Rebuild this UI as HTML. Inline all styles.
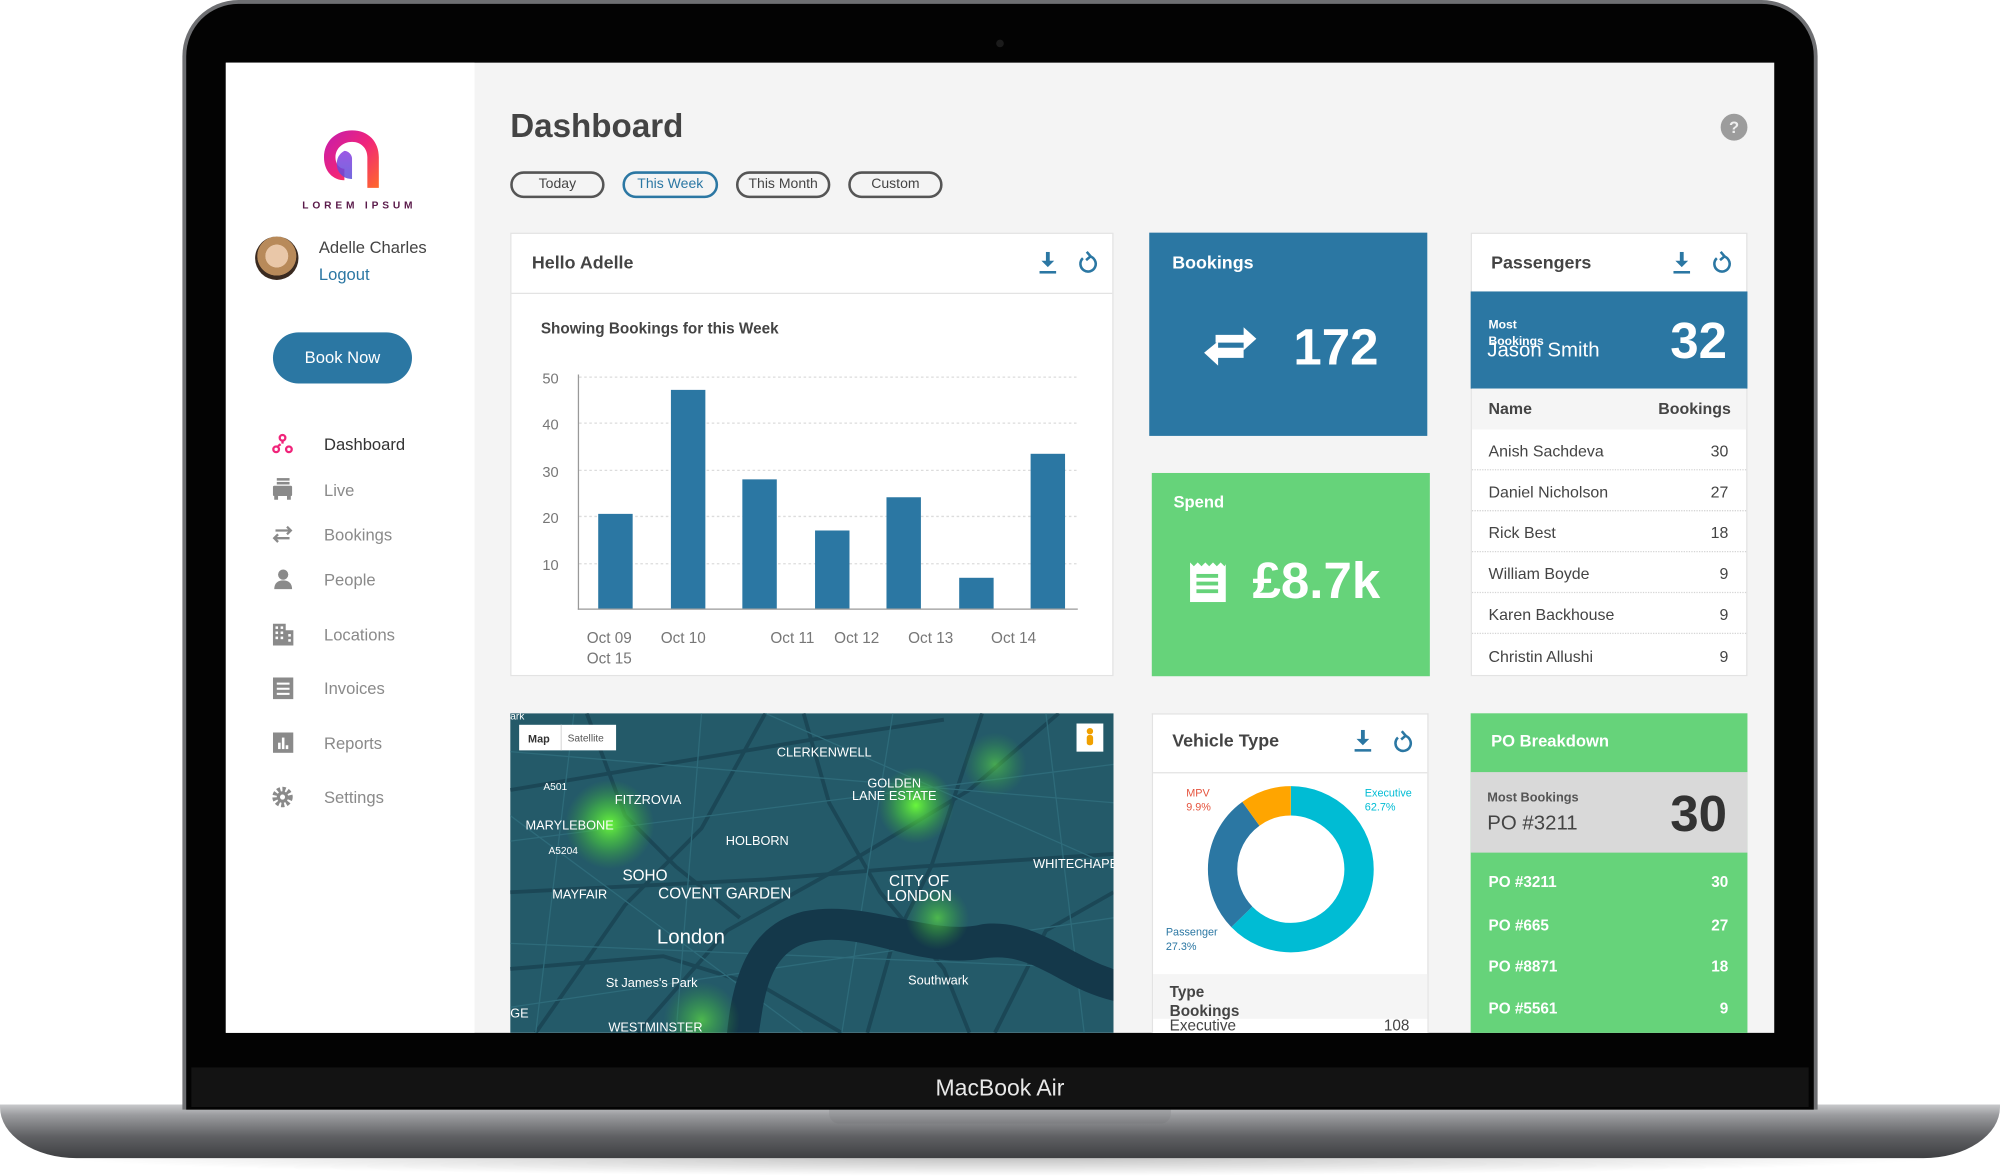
<!DOCTYPE html>
<html><head><meta charset="utf-8"><style>
*{margin:0;padding:0;box-sizing:border-box}
body{width:2000px;height:1176px;overflow:hidden;background:#fff;font-family:"Liberation Sans",sans-serif}
#w{position:absolute;left:0;top:0;width:1568px;height:920px;transform:scale(1.27551,1.2783);transform-origin:0 0}
.a{position:absolute}
.t{position:absolute;white-space:nowrap;line-height:1}
.card{position:absolute;background:#fff;border:1px solid #e3e3e3}
.nav{position:absolute;left:254px;font-size:13px;color:#8a8a8a;line-height:1}
.pill{position:absolute;top:134px;height:21px;border:2px solid #555;border-radius:11px;font-size:11px;color:#444;text-align:center;line-height:17px}
.row{position:absolute;left:1154px;width:215px;height:32px;border-bottom:1px dotted #d5d5d5;font-size:12.5px;color:#444}
.row span{position:absolute;top:10px}
.po{position:absolute;left:1167px;width:188px;font-size:12px;font-weight:bold;color:#fff;line-height:1}
.po b{position:absolute;right:0}
</style></head><body><div id="w">
<!-- shadow & base -->
<div class="a" style="left:40px;top:890px;width:1488px;height:30px;border-radius:50%;background:radial-gradient(ellipse at center,rgba(0,0,0,.25),rgba(0,0,0,0) 70%)"></div>
<div class="a" style="left:0;top:864px;width:1568px;height:42px;border-radius:0 0 60px 60px/0 0 40px 40px;background:linear-gradient(#c9cacc 0%,#9a9b9e 20%,#5f6063 60%,#3e3f42 100%)"></div>
<div class="a" style="left:650px;top:866px;width:268px;height:13px;border-radius:0 0 8px 8px;background:linear-gradient(#a9aaad,#7d7e81)"></div>
<!-- lid -->
<div class="a" style="left:143px;top:0;width:1282px;height:868px;border-radius:44px 44px 0 0;background:#6e6f72"></div>
<div class="a" style="left:146px;top:3px;width:1276px;height:865px;border-radius:41px 41px 0 0;background:#030303"></div>
<div class="a" style="left:150px;top:835px;width:1268px;height:31px;background:#131313"></div>
<div class="t" style="left:684px;top:842px;width:200px;text-align:center;color:#e8e8e8;font-size:18px">MacBook Air</div>
<div class="a" style="left:781px;top:31px;width:6px;height:6px;border-radius:50%;background:#1b1b1b"></div>
<!-- screen -->
<div class="a" style="left:177px;top:49px;width:1214px;height:759px;background:#f4f4f4;overflow:hidden">
<div class="a" style="left:0;top:0;width:195px;height:759px;background:#fff"></div>
</div>
<!-- sidebar -->
<svg class="a" style="left:250px;top:98px" width="52" height="54" viewBox="0 0 52 54"><defs><linearGradient id="lg" x1="0" y1="0" x2="1" y2="1"><stop offset="0" stop-color="#c21cb0"/><stop offset=".5" stop-color="#f0247a"/><stop offset="1" stop-color="#ff6a2a"/></linearGradient><linearGradient id="lg2" x1="0" y1="0" x2="0" y2="1"><stop offset="0" stop-color="#8a3be0"/><stop offset="1" stop-color="#5a4fd8"/></linearGradient></defs><path d="M26 4C13 4 4 13 4 25c0 11 7 18 16 18l0-9c-4 0-7-4-7-9 0-7 6-12 13-12s12 5 12 12v24h9V25C47 13 39 4 26 4z" fill="url(#lg)"/><path d="M20 20c-4 2-6 6-6 10 0 7 5 12 12 12V26c0-3-3-6-6-6z" fill="url(#lg2)" opacity=".85"/></svg>
<div class="t" style="left:237px;top:157px;font-size:8px;font-weight:bold;letter-spacing:3px;color:#5a1a4a">LOREM IPSUM</div>
<div class="a" style="left:200px;top:185px;width:34px;height:34px;border-radius:50%;background:radial-gradient(circle at 50% 45%,#e9c7a8 0 35%,#b88a5a 36% 60%,#3a2a20 61%)"></div>
<div class="t" style="left:250px;top:187px;font-size:13px;color:#444">Adelle Charles</div>
<div class="t" style="left:250px;top:208px;font-size:13px;color:#2b77a3">Logout</div>
<div class="a" style="left:214px;top:260px;width:109px;height:40px;border-radius:20px;background:#2b77a3;color:#fff;font-size:13px;text-align:center;line-height:40px">Book Now</div>
<svg class="a" style="left:213px;top:339px" width="17" height="17" viewBox="0 0 17 17" fill="none" stroke="#f0247a" stroke-width="1.8"><circle cx="8.5" cy="3.5" r="2.2"/><circle cx="3.5" cy="12.5" r="2.2"/><circle cx="13.5" cy="12.5" r="2.2"/><path d="M8.5 6v2M5 10l2-1.5"/></svg>
<div class="nav" style="top:341px;color:#333">Dashboard</div>
<svg class="a" style="left:213px;top:373px" width="17" height="18" viewBox="0 0 17 18" fill="#8a8a8a"><rect x="1" y="7" width="15" height="8" rx="1"/><rect x="2" y="15" width="3" height="3"/><rect x="12" y="15" width="3" height="3"/><rect x="4" y="1" width="10" height="2"/><rect x="4" y="4" width="10" height="2"/></svg>
<div class="nav" style="top:377px">Live</div>
<svg class="a" style="left:213px;top:411px" width="17" height="14" viewBox="0 0 17 14" fill="none" stroke="#8a8a8a" stroke-width="1.8"><path d="M3 4h12M12 1l3 3-3 3M14 10H2M5 7l-3 3 3 3"/></svg>
<div class="nav" style="top:412px">Bookings</div>
<svg class="a" style="left:214px;top:445px" width="16" height="16" viewBox="0 0 16 16" fill="#8a8a8a"><circle cx="8" cy="4.5" r="4"/><path d="M1 16c0-5 3-7 7-7s7 2 7 7z"/></svg>
<div class="nav" style="top:447px">People</div>
<svg class="a" style="left:213px;top:487px" width="18" height="18" viewBox="0 0 18 18" fill="#8a8a8a"><path d="M1 1h10v17H1zM11 6h6v12h-6z"/><g fill="#fff"><rect x="3" y="3" width="2" height="2"/><rect x="7" y="3" width="2" height="2"/><rect x="3" y="7" width="2" height="2"/><rect x="7" y="7" width="2" height="2"/><rect x="3" y="11" width="2" height="2"/><rect x="7" y="11" width="2" height="2"/><rect x="13" y="9" width="2" height="2"/><rect x="13" y="13" width="2" height="2"/></g></svg>
<div class="nav" style="top:490px">Locations</div>
<svg class="a" style="left:214px;top:530px" width="16" height="17" viewBox="0 0 16 17" fill="#8a8a8a"><rect width="16" height="17"/><g fill="#fff"><rect x="3" y="4" width="10" height="1.6"/><rect x="3" y="8" width="10" height="1.6"/><rect x="3" y="12" width="10" height="1.6"/></g></svg>
<div class="nav" style="top:532px">Invoices</div>
<svg class="a" style="left:214px;top:573px" width="16" height="16" viewBox="0 0 16 16" fill="#8a8a8a"><rect width="16" height="16"/><g fill="#fff"><rect x="4" y="8" width="2" height="5"/><rect x="7" y="4" width="2" height="9"/><rect x="10" y="10" width="2" height="3"/></g></svg>
<div class="nav" style="top:575px">Reports</div>
<svg class="a" style="left:213px;top:615px" width="17" height="17" viewBox="0 0 17 17"><circle cx="8.5" cy="8.5" r="6" fill="none" stroke="#8a8a8a" stroke-width="4" stroke-dasharray="2.4 1.6"/><circle cx="8.5" cy="8.5" r="4.5" fill="#8a8a8a"/><circle cx="8.5" cy="8.5" r="2" fill="#fff"/></svg>
<div class="nav" style="top:617px">Settings</div>
<!-- header -->
<div class="t" style="left:400px;top:85px;font-size:26px;font-weight:bold;color:#444">Dashboard</div>
<div class="a" style="left:1349px;top:89px;width:21px;height:21px;border-radius:50%;background:#9c9c9c;color:#eee;font-size:13px;font-weight:bold;text-align:center;line-height:21px">?</div>
<div class="pill" style="left:400px;width:74px">Today</div>
<div class="pill" style="left:488px;width:75px;border-color:#2b77a3;color:#2b77a3">This Week</div>
<div class="pill" style="left:577px;width:74px">This Month</div>
<div class="pill" style="left:665px;width:74px">Custom</div>
<!-- hello card -->
<div class="card" style="left:400px;top:182px;width:473px;height:347px"></div>
<div class="a" style="left:401px;top:229px;width:471px;height:1px;background:#e3e3e3"></div>
<div class="t" style="left:417px;top:198px;font-size:14px;font-weight:bold;color:#444">Hello Adelle</div>
<svg class="a" style="left:814px;top:197px" width="15" height="18" viewBox="0 0 15 18" fill="#2b77a3"><path d="M6 0h3v7h3.5L7.5 12 2.5 7H6z"/><rect x="1" y="15" width="13" height="2"/></svg>
<svg class="a" style="left:844px;top:196px" width="17" height="19" viewBox="0 0 17 19" fill="none" stroke="#2b77a3" stroke-width="2"><path d="M5 6a6 6 0 1 0 5-1.5"/><path d="M8 1l3 3.5-3.5 3" /></svg>
<div class="t" style="left:424px;top:251px;font-size:12px;font-weight:bold;color:#444">Showing Bookings for this Week</div>
<svg class="a" style="left:410px;top:285px" width="450" height="240" viewBox="410 285 450 240">
<g stroke="#dcdcdc" stroke-dasharray="2 2"><line x1="454" y1="295" x2="845" y2="295"/><line x1="454" y1="331" x2="845" y2="331"/><line x1="454" y1="368" x2="845" y2="368"/><line x1="454" y1="404" x2="845" y2="404"/><line x1="454" y1="441" x2="845" y2="441"/></g>
<line x1="453.5" y1="293" x2="453.5" y2="477" stroke="#999"/><line x1="453" y1="476.5" x2="845" y2="476.5" stroke="#999"/>
<g font-size="11.5" fill="#777" text-anchor="end" font-family="Liberation Sans"><text x="438" y="300">50</text><text x="438" y="336">40</text><text x="438" y="373">30</text><text x="438" y="409">20</text><text x="438" y="446">10</text></g>
<g fill="#2b77a3"><rect x="469" y="402" width="27" height="74"/><rect x="526" y="305" width="27" height="171"/><rect x="582" y="375" width="27" height="101"/><rect x="639" y="415" width="27" height="61"/><rect x="695" y="389" width="27" height="87"/><rect x="752" y="452" width="27" height="24"/><rect x="808" y="355" width="27" height="121"/></g>
<g font-size="12" fill="#777" font-family="Liberation Sans"><text x="460" y="503">Oct 09</text><text x="518" y="503">Oct 10</text><text x="604" y="503">Oct 11</text><text x="654" y="503">Oct 12</text><text x="712" y="503">Oct 13</text><text x="777" y="503">Oct 14</text><text x="460" y="519">Oct 15</text></g>
</svg>
<!-- bookings -->
<div class="a" style="left:901px;top:182px;width:218px;height:159px;background:#2b77a3"></div>
<div class="t" style="left:919px;top:198px;font-size:14px;font-weight:bold;color:#fff">Bookings</div>
<svg class="a" style="left:941px;top:253px" width="46" height="34" viewBox="0 0 46 34" fill="#fff"><path d="M12 9h22V3l10 9-10 9v-6H12z"/><path d="M34 19H14v-5L3 23l11 10v-6h20z"/></svg>
<div class="t" style="left:1014px;top:252px;font-size:40px;font-weight:bold;color:#fff">172</div>
<!-- spend -->
<div class="a" style="left:903px;top:370px;width:218px;height:159px;background:#66d37a"></div>
<div class="t" style="left:920px;top:386px;font-size:13px;font-weight:bold;color:#fff">Spend</div>
<svg class="a" style="left:932px;top:440px" width="29" height="31" viewBox="0 0 29 31" fill="#fff"><path d="M1 0l3 3 3-3 3 3 3-3 3 3 3-3 3 3 3-3 3 3 2-3v31H1z"/><g fill="#66d37a"><rect x="6" y="9" width="17" height="3"/><rect x="6" y="15" width="17" height="3"/><rect x="6" y="21" width="17" height="3"/></g></svg>
<div class="t" style="left:982px;top:435px;font-size:40px;font-weight:bold;color:#fff">£8.7k</div>
<!-- passengers -->
<div class="card" style="left:1153px;top:182px;width:217px;height:347px"></div>
<div class="t" style="left:1169px;top:198px;font-size:14px;font-weight:bold;color:#444">Passengers</div>
<svg class="a" style="left:1311px;top:197px" width="15" height="18" viewBox="0 0 15 18" fill="#2b77a3"><path d="M6 0h3v7h3.5L7.5 12 2.5 7H6z"/><rect x="1" y="15" width="13" height="2"/></svg>
<svg class="a" style="left:1341px;top:196px" width="17" height="19" viewBox="0 0 17 19" fill="none" stroke="#2b77a3" stroke-width="2"><path d="M5 6a6 6 0 1 0 5-1.5"/><path d="M8 1l3 3.5-3.5 3"/></svg>
<div class="a" style="left:1153px;top:228px;width:217px;height:76px;background:#2b77a3"></div>
<div class="t" style="left:1167px;top:250px;font-size:9.5px;font-weight:bold;color:#fff">Most</div>
<div class="t" style="left:1167px;top:263px;font-size:9.5px;font-weight:bold;color:#fff">Bookings</div>
<div class="t" style="left:1166px;top:267px;font-size:16px;color:#fff">Jason Smith</div>
<div class="t" style="left:1290px;top:247px;width:64px;text-align:right;font-size:40px;font-weight:bold;color:#fff">32</div>
<div class="a" style="left:1154px;top:304px;width:215px;height:32px;background:#f5f5f5"></div>
<div class="t" style="left:1167px;top:314px;font-size:12.5px;font-weight:bold;color:#444">Name</div>
<div class="t" style="left:1290px;top:314px;width:67px;text-align:right;font-size:12.5px;font-weight:bold;color:#444">Bookings</div>
<div class="row" style="top:336px"><span style="left:13px">Anish Sachdeva</span><span style="right:14px">30</span></div>
<div class="row" style="top:368px"><span style="left:13px">Daniel Nicholson</span><span style="right:14px">27</span></div>
<div class="row" style="top:400px"><span style="left:13px">Rick Best</span><span style="right:14px">18</span></div>
<div class="row" style="top:432px"><span style="left:13px">William Boyde</span><span style="right:14px">9</span></div>
<div class="row" style="top:464px"><span style="left:13px">Karen Backhouse</span><span style="right:14px">9</span></div>
<div class="row" style="top:497px;border:none"><span style="left:13px">Christin Allushi</span><span style="right:14px">9</span></div>
<!-- map -->
<svg class="a" style="left:400px;top:558px" width="473" height="250" viewBox="0 0 473 250">
<defs><radialGradient id="gl"><stop offset="0" stop-color="#6dff3a" stop-opacity=".95"/><stop offset=".5" stop-color="#4bd23a" stop-opacity=".55"/><stop offset="1" stop-color="#3aa63a" stop-opacity="0"/></radialGradient></defs>
<rect width="473" height="250" fill="#245a69"/>
<g stroke="#1b4756" stroke-width="3" fill="none"><path d="M0 60 L120 40 L240 20 L340 5"/><path d="M20 250 L90 150 L150 90 L200 0"/><path d="M0 140 L200 130 L320 120 L473 110"/><path d="M100 250 L170 170 L260 120 L360 60 L430 0"/><path d="M280 250 L300 180 L330 120 L370 0"/><path d="M0 200 L120 190 L200 215 L260 250"/><path d="M380 250 L420 170 L473 140"/><path d="M60 0 L90 80 L130 120 L180 160"/><path d="M230 0 L250 70 L290 140 L340 200 L360 250"/></g>
<g stroke="#2e6b7a" stroke-width="1" fill="none"><path d="M0 30 L473 70M0 100 L473 40M0 180 L473 200M50 0 L20 250M150 0 L130 250M300 0 L260 250M420 0 L450 250M0 230 L473 160M200 0 L473 120M0 80 L230 250"/></g>
<path d="M170 250 C175 200 190 165 230 155 C280 145 330 175 370 165 C410 160 440 190 473 200 L473 225 C430 215 410 185 370 192 C320 200 280 172 240 178 C205 183 200 215 195 250 Z" fill="#14384a"/>
<circle cx="78" cy="87" r="35" fill="url(#gl)"/><circle cx="318" cy="72" r="30" fill="url(#gl)"/><circle cx="335" cy="160" r="25" fill="url(#gl)" opacity=".6"/><circle cx="150" cy="240" r="30" fill="url(#gl)" opacity=".6"/><circle cx="380" cy="40" r="25" fill="url(#gl)" opacity=".5"/>
<g fill="#fff" font-family="Liberation Sans" font-size="10"><text x="209" y="34">CLERKENWELL</text><text x="280" y="58">GOLDEN</text><text x="268" y="68">LANE ESTATE</text><text x="82" y="71">FITZROVIA</text><text x="12" y="91">MARYLEBONE</text><text x="169" y="103">HOLBORN</text><text x="88" y="131" font-size="12">SOHO</text><text x="33" y="145">MAYFAIR</text><text x="116" y="145" font-size="12">COVENT GARDEN</text><text x="297" y="135" font-size="12">CITY OF</text><text x="295" y="147" font-size="12">LONDON</text><text x="410" y="121">WHITECHAPEL</text><text x="115" y="180" font-size="16">London</text><text x="75" y="214">St James's Park</text><text x="312" y="212">Southwark</text><text x="77" y="249">WESTMINSTER</text><text x="0" y="238">GE</text><text x="26" y="60" font-size="8">A501</text><text x="30" y="110" font-size="8">A5204</text><text x="0" y="5" font-size="8">ark</text></g>
<rect x="7" y="9" width="76" height="20" fill="#fff"/><line x1="40" y1="9" x2="40" y2="29" stroke="#ddd"/><text x="14" y="23" font-size="8.5" font-weight="bold" fill="#333" font-family="Liberation Sans">Map</text><text x="45" y="22" font-size="8" fill="#555" font-family="Liberation Sans">Satellite</text>
<rect x="444" y="8" width="21" height="22" fill="#fff"/><circle cx="454.5" cy="14" r="2.5" fill="#f0a000"/><rect x="452" y="17" width="5" height="8" rx="2" fill="#f0a000"/>
</svg>
<!-- vehicle type -->
<div class="card" style="left:903px;top:558px;width:217px;height:250px;border-bottom:none"></div>
<div class="a" style="left:904px;top:604px;width:215px;height:1px;background:#e3e3e3"></div>
<div class="t" style="left:919px;top:572px;font-size:14px;font-weight:bold;color:#444">Vehicle Type</div>
<svg class="a" style="left:1061px;top:571px" width="15" height="18" viewBox="0 0 15 18" fill="#2b77a3"><path d="M6 0h3v7h3.5L7.5 12 2.5 7H6z"/><rect x="1" y="15" width="13" height="2"/></svg>
<svg class="a" style="left:1091px;top:571px" width="17" height="19" viewBox="0 0 17 19" fill="none" stroke="#2b77a3" stroke-width="2"><path d="M5 6a6 6 0 1 0 5-1.5"/><path d="M8 1l3 3.5-3.5 3"/></svg>
<svg class="a" style="left:940px;top:608px" width="144" height="144" viewBox="0 0 144 144"><g transform="rotate(-90 72 72)" fill="none" stroke-width="23"><circle cx="72" cy="72" r="53.5" stroke="#00bcd4" stroke-dasharray="210.8 336.2"/><circle cx="72" cy="72" r="53.5" stroke="#2b77a3" stroke-dasharray="0 210.8 91.8 336.2"/><circle cx="72" cy="72" r="53.5" stroke="#ffa500" stroke-dasharray="0 302.6 33.6 336.2"/></g></svg>
<div class="t" style="left:930px;top:616px;font-size:8.5px;color:#e5533d">MPV</div>
<div class="t" style="left:930px;top:627px;font-size:8.5px;color:#e5533d">9.9%</div>
<div class="t" style="left:1070px;top:616px;font-size:8.5px;color:#00bcd4">Executive</div>
<div class="t" style="left:1070px;top:627px;font-size:8.5px;color:#00bcd4">62.7%</div>
<div class="t" style="left:914px;top:725px;font-size:8.5px;color:#2b77a3">Passenger</div>
<div class="t" style="left:914px;top:736px;font-size:8.5px;color:#2b77a3">27.3%</div>
<div class="a" style="left:904px;top:762px;width:215px;height:46px;background:#f5f5f5"></div>
<div class="a" style="left:904px;top:797px;width:215px;height:11px;background:#fff"></div>
<div class="t" style="left:917px;top:770px;font-size:12px;font-weight:bold;color:#444">Type</div>
<div class="t" style="left:917px;top:785px;font-size:12px;font-weight:bold;color:#444">Bookings</div>
<div class="t" style="left:917px;top:796px;font-size:12px;color:#444">Executive</div>
<div class="t" style="left:1060px;top:796px;width:45px;text-align:right;font-size:12px;color:#444">108</div>
<!-- PO -->
<div class="a" style="left:1153px;top:558px;width:217px;height:250px;background:#66d37a"></div>
<div class="t" style="left:1169px;top:573px;font-size:13px;font-weight:bold;color:#fff">PO Breakdown</div>
<div class="a" style="left:1153px;top:604px;width:217px;height:63px;background:#d9d9d9"></div>
<div class="t" style="left:1166px;top:620px;font-size:10px;font-weight:bold;color:#555">Most Bookings</div>
<div class="t" style="left:1166px;top:637px;font-size:16px;color:#444">PO #3211</div>
<div class="t" style="left:1290px;top:617px;width:64px;text-align:right;font-size:40px;font-weight:bold;color:#333">30</div>
<div class="po" style="top:684px">PO #3211<b>30</b></div>
<div class="po" style="top:718px">PO #665<b>27</b></div>
<div class="po" style="top:750px">PO #8871<b>18</b></div>
<div class="po" style="top:783px">PO #5561<b>9</b></div>
</div></body></html>
